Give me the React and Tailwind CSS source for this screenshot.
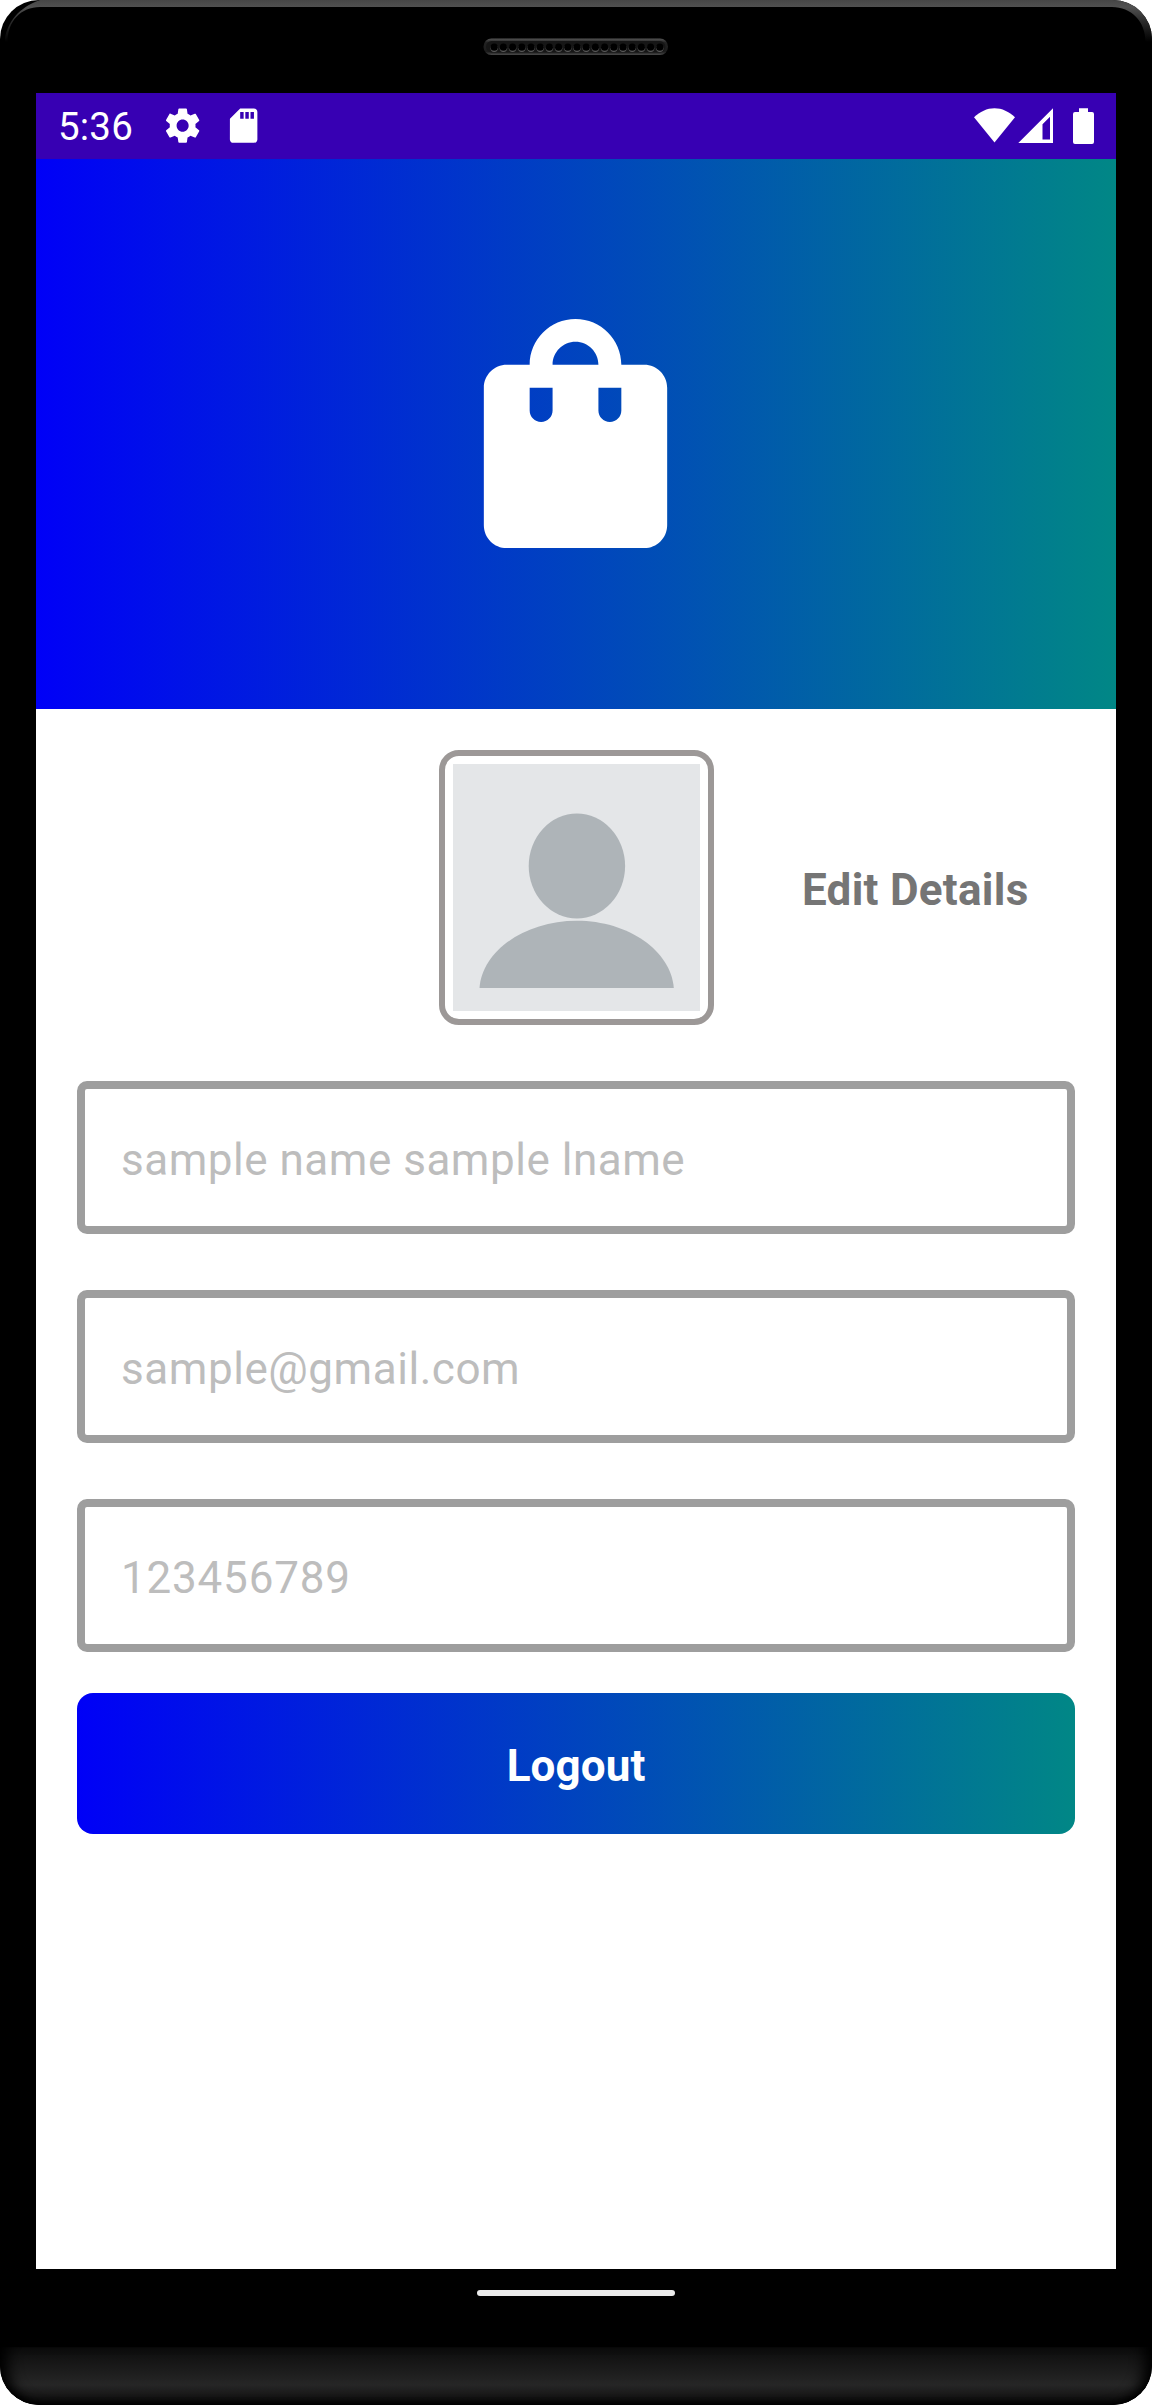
const FIELDS = [
  { text: "sample name sample lname", spacing: "tracking-[0.52px]" },
  { text: "sample@gmail.com", spacing: "tracking-[0.55px]" },
  { text: "123456789", spacing: "tracking-[0.8px]" },
];

function Speaker() {
  return (
    <svg width="186" height="18" viewBox="0 0 186 18">
      <defs>
        <linearGradient id="spk" x1="0" y1="0" x2="0" y2="1">
          <stop offset="0" stopColor="#555" />
          <stop offset="0.25" stopColor="#222" />
          <stop offset="0.8" stopColor="#1c1c1c" />
          <stop offset="1" stopColor="#4a4a4a" />
        </linearGradient>
      </defs>
      <rect x="0.5" y="0.5" width="184.5" height="16.5" rx="8" fill="url(#spk)" />
      <rect x="3" y="3" width="179.5" height="11.5" rx="5.7" fill="#161616" />
      {Array.from({ length: 19 }, (_, i) => (
        <g key={i}>
          <circle cx={11.2 + i * 9.2} cy="10.2" r="3.7" fill="#5a5a5a" />
          <circle cx={11.2 + i * 9.2} cy="9.2" r="3.6" fill="#000" />
        </g>
      ))}
    </svg>
  );
}

function BezelHighlight() {
  return (
    <svg className="absolute left-0 top-0" width="1152" height="50" viewBox="0 0 1152 50" fill="none">
      <defs>
        <linearGradient id="rim" gradientUnits="userSpaceOnUse" x1="0" y1="0" x2="0" y2="42">
          <stop offset="0" stopColor="#464646" />
          <stop offset="0.17" stopColor="#505050" />
          <stop offset="0.5" stopColor="#2c2c2c" />
          <stop offset="1" stopColor="#000" />
        </linearGradient>
      </defs>
      <path
        d="M0 0H1152V50H1145.500V42C1145.500 21 1131 7 1112 7H40C21 7 7.500 21 7.500 42V50H5V38C8 22 18 8 40 0Z"
        fill="url(#rim)"
      />
    </svg>
  );
}

function StatusBar() {
  return (
    <div className="flex h-[66px] items-center bg-[#3700b3] text-white">
      <span className="ml-[22px] w-[76px] pt-[3px] text-[38.5px] leading-none tracking-[0.2px]">5:36</span>
      <svg className="ml-[27.5px]" width="41.25" height="41.25" viewBox="0 0 24 24" fill="currentColor">
        <path d="M19.43 12.98c.04-.32.07-.64.07-.98s-.03-.66-.07-.98l2.11-1.65c.19-.15.24-.42.12-.64l-2-3.46c-.12-.22-.39-.3-.61-.22l-2.49 1c-.52-.4-1.08-.73-1.69-.98l-.38-2.65C14.46 2.18 14.25 2 14 2h-4c-.25 0-.46.18-.49.42l-.38 2.650c-.61.25-1.17.59-1.69.98l-2.49-1c-.23-.09-.49 0-.61.22l-2 3.460c-.13.22-.07.49.12.64l2.110 1.650c-.04.32-.07.65-.07.98s.03.66.07.98l-2.110 1.650c-.19.15-.24.42-.12.64l2 3.460c.12.22.39.3.61.22l2.490-1c.52.4 1.080.73 1.690.98l.38 2.650c.03.24.24.42.49.42h4c.25 0 .46-.18.49-.42l.38-2.650c.61-.25 1.170-.59 1.690-.98l2.490 1c.23.09.49 0 .61-.22l2-3.460c.12-.22.07-.49-.12-.64l-2.110-1.650zM12 15.500c-1.930 0-3.500-1.570-3.500-3.500s1.570-3.500 3.500-3.500 3.500 1.570 3.500 3.500-1.570 3.500-3.500 3.500z" />
      </svg>
      <svg className="ml-5" width="41.25" height="41.25" viewBox="0 0 24 24" fill="currentColor">
        <path d="M18 2h-8L4.020 8 4 20c0 1.100.9 2 2 2h12c1.100 0 2-.9 2-2V4c0-1.100-.9-2-2-2zm-6 6h-2V4h2v4zm3 0h-2V4h2v4zm3 0h-2V4h2v4z" />
      </svg>
      <svg className="ml-auto mr-[22px]" width="120" height="36" viewBox="0 0 120 36" fill="currentColor">
        <path d="M0 9.300C6 3.500 13 0.200 20.500 0.200S35 3.500 41 9.300L20.500 34.500Z" />
        <path fillRule="evenodd" d="M44.300 35 79 0.300V35ZM68.500 16.200V31.500H76V8.700Z" />
        <path d="M105 0.200h9V4h4a2 2 0 0 1 2 2V34a2 2 0 0 1-2 2H101a2 2 0 0 1-2-2V6a2 2 0 0 1 2-2h4Z" />
      </svg>
    </div>
  );
}

export default function App() {
  return (
    <div className="h-[2405px] w-[1152px] bg-white font-['Roboto',sans-serif]">
      <div className="relative flex h-full flex-col overflow-hidden rounded-[39px] bg-black">
        <BezelHighlight />
        <div className="flex h-[93px] shrink-0 justify-center pt-[38px]">
          <Speaker />
        </div>
        <main className="mx-9 flex h-[2176px] flex-col bg-white">
          <StatusBar />
          <header className="flex h-[550px] items-center justify-center bg-linear-to-r/srgb from-[#0000f7] to-[#018786] pb-[2px] pr-[2px]">
            <svg width="275" height="275" viewBox="0 0 24 24" fill="#fff">
              <path d="M18 6h-2c0-2.210-1.790-4-4-4S8 3.790 8 6H6c-1.100 0-2 .9-2 2v12c0 1.100.9 2 2 2h12c1.100 0 2-.9 2-2V8c0-1.100-.9-2-2-2zm-8 4c0 .55-.45 1-1 1s-1-.45-1-1V8h2v2zm2-6c1.100 0 2 .9 2 2h-4c0-1.100.9-2 2-2zm4 6c0 .55-.45 1-1 1s-1-.45-1-1V8h2v2z" />
            </svg>
          </header>
          <section className="mt-[41px] grid grid-cols-[403px_275px_1fr] items-center">
            <div className="col-start-2 h-[275px] rounded-[20px] border-[6px] border-[#9c9897] p-2">
              <svg className="block bg-[#e4e6e8]" width="247" height="247" viewBox="453 764 247 247" fill="#aeb4b8">
                <ellipse cx="576.900" cy="866" rx="48.200" ry="52.500" />
                <path d="M479.500 988C482 951 525 920.700 576.800 920.700S671 951 673.800 988Z" />
              </svg>
            </div>
            <div className="pl-[88px] pt-1 text-[44px] font-bold leading-[52px] tracking-[0.27px] text-[#757575]">
              Edit Details
            </div>
          </section>
          <section className="mx-[41px] mt-14 flex flex-col gap-14">
            {FIELDS.map(({ text, spacing }) => (
              <div
                key={text}
                className={`flex h-[153px] items-center rounded-[10px] border-8 border-[#9e9e9e] pl-9 pt-1 text-[44px] text-[#bdbdbd] ${spacing}`}
              >
                {text}
              </div>
            ))}
          </section>
          <button className="mx-[41px] mt-[41px] h-[141px] rounded-2xl bg-linear-to-r/srgb from-[#0000f7] to-[#018786] pt-1 text-[44px] font-bold tracking-[0.1px] text-white">
            Logout
          </button>
        </main>
        <div className="flex h-[78px] justify-center pt-[21px]">
          <div className="h-1.5 w-[198px] rounded-full bg-[#ebebeb]" />
        </div>
        <div className="h-[58px] rounded-b-[39px] bg-linear-to-b/srgb from-[#0c0c0c] via-[#262626] via-65% to-[#0a0a0a] shadow-[inset_16px_0_14px_-8px_#000,inset_-16px_0_14px_-8px_#000,inset_0_-5px_7px_-3px_#000]" />
      </div>
    </div>
  );
}
